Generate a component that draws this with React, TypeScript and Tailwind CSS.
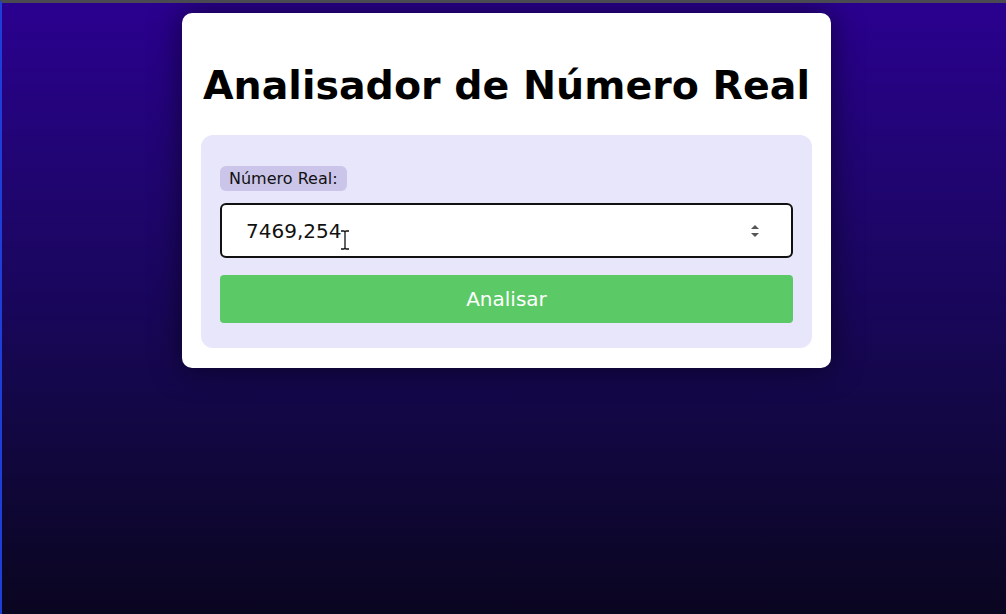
import React from "react";

function Spinner() {
  return (
    <svg width="10" height="16" viewBox="0 0 10 16" className="shrink-0">
      <path d="M5 2 L9 6 L1 6 Z" fill="#555" />
      <path d="M1 10 L9 10 L5 14 Z" fill="#555" />
    </svg>
  );
}

function IBeam() {
  return (
    <svg width="10" height="20" viewBox="0 0 10 20" className="absolute left-[338px] top-[227px]">
      <path d="M1 1 H4 Q5 1 5 3 V17 Q5 19 4 19 H1 M9 1 H6 Q5 1 5 3 M5 17 Q5 19 6 19 H9" stroke="#111" strokeWidth="1.3" fill="none" />
    </svg>
  );
}

export default function App() {
  const [value, setValue] = React.useState("7469,254");

  return (
    <div
      className="relative h-[614px] w-[1006px] overflow-hidden border-t-[3px] border-l-[2px] border-t-[#4a4a52] border-l-[#1d3fd8] bg-gradient-to-b from-[#2a008f] via-[#18065a] to-[#0a0520]"
      style={{ fontFamily: '"DejaVu Sans", Verdana, sans-serif' }}
    >
      <div className="flex pt-[10px] pl-[180px]">
        <div className="w-[649px] rounded-[10px] bg-white px-[19px] pt-[49px] pb-[20px] shadow-[0_0_30px_rgba(0,0,0,0.55)]">
          <h1 className="mb-[27px] text-center text-[39.5px] font-bold leading-[46px] text-black whitespace-nowrap">
            Analisador de Número Real
          </h1>
          <div className="rounded-[12px] bg-[#e8e6fb] px-[19px] pt-[31px] pb-[25px]">
            <label className="inline-block rounded-[6px] bg-[#cbc5ea] px-[9px] py-[4px] text-[16px] leading-[17px] text-[#111]">
              Número Real:
            </label>
            <div className="mt-[12px] flex h-[55px] items-center rounded-[6px] border-2 border-[#111] bg-white pr-[31px] pl-[24px]">
              <input
                type="text"
                value={value}
                onChange={(e) => setValue(e.target.value)}
                className="min-w-0 flex-1 bg-transparent text-[20px] text-[#111] outline-none"
                style={{ fontFamily: '"DejaVu Sans", Verdana, sans-serif' }}
              />
              <Spinner />
            </div>
            <button
              type="button"
              className="mt-[17px] h-[48px] w-full rounded-[4px] bg-[#5bca66] text-[20px] text-white"
              style={{ fontFamily: '"DejaVu Sans", Verdana, sans-serif' }}
            >
              Analisar
            </button>
          </div>
        </div>
      </div>
      <IBeam />
    </div>
  );
}
